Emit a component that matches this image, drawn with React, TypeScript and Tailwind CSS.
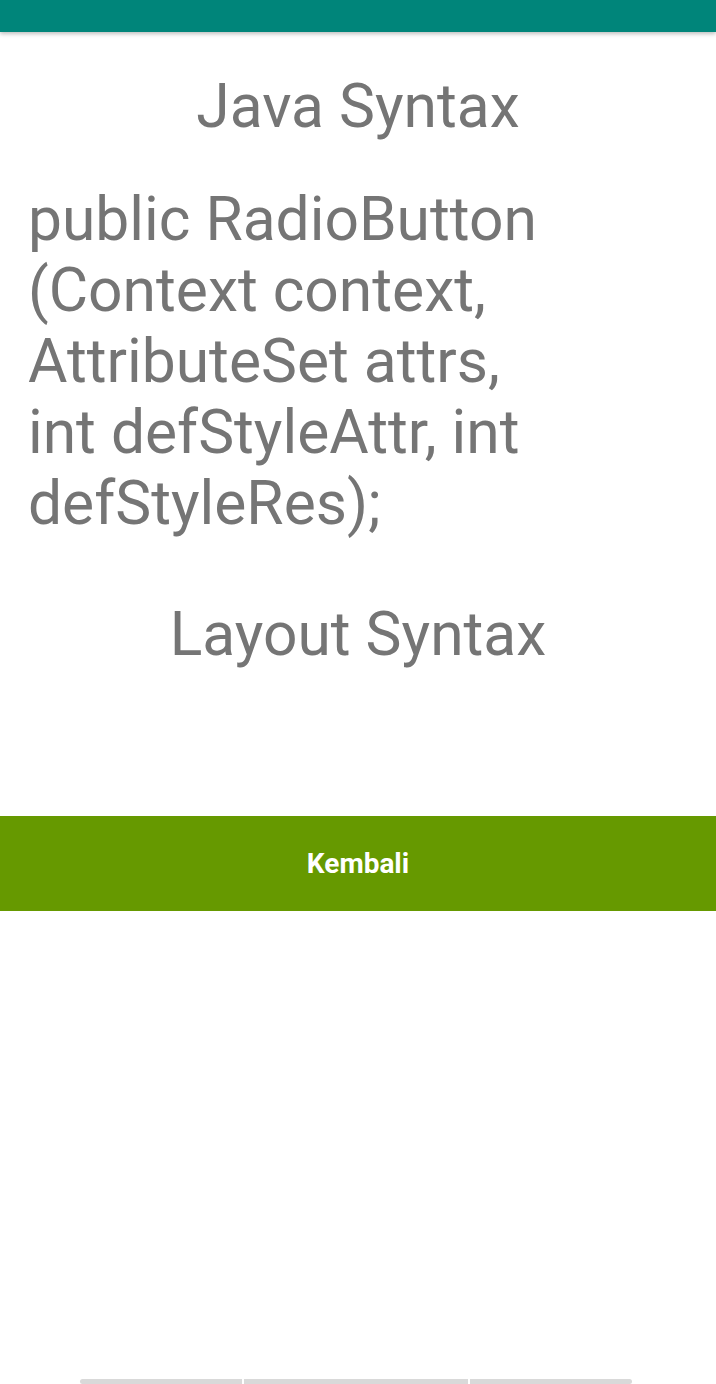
export default function App() {
    return (
        <div className="relative w-[716px] h-[1384px] bg-white overflow-hidden font-['Roboto',sans-serif] text-[#757575]">
            {/* action bar, scrolled mostly out of view */}
            <div className="h-[32px] bg-[#00857a] shadow-[0_2px_4px_rgba(0,0,0,0.25)]" />

            <div className="flex flex-col">
                <h1 className="mt-[40px] text-center text-[60.5px] leading-[70px] font-normal">Java Syntax</h1>
                <p className="mt-[42px] pl-[28px] text-[60.5px] leading-[71px]">
                    public RadioButton
                    <br />
                    (Context context,
                    <br />
                    AttributeSet attrs,
                    <br />
                    int defStyleAttr, int
                    <br />
                    defStyleRes);
                </p>
                <h2 className="mt-[61px] text-center text-[60.5px] leading-[70px] font-normal">Layout Syntax</h2>
                <button className="mt-[146px] h-[95px] w-full bg-[#669900] text-white text-[28px] font-bold">
                    Kembali
                </button>
            </div>

            {/* scroll indicator */}
            <div className="absolute bottom-0 left-[80px] flex gap-[2px] h-[5px]">
                <div className="w-[162px] bg-[#d9d9d9] rounded-l-full" />
                <div className="w-[224px] bg-[#d9d9d9]" />
                <div className="w-[162px] bg-[#d9d9d9] rounded-r-full" />
            </div>
        </div>
    );
}
